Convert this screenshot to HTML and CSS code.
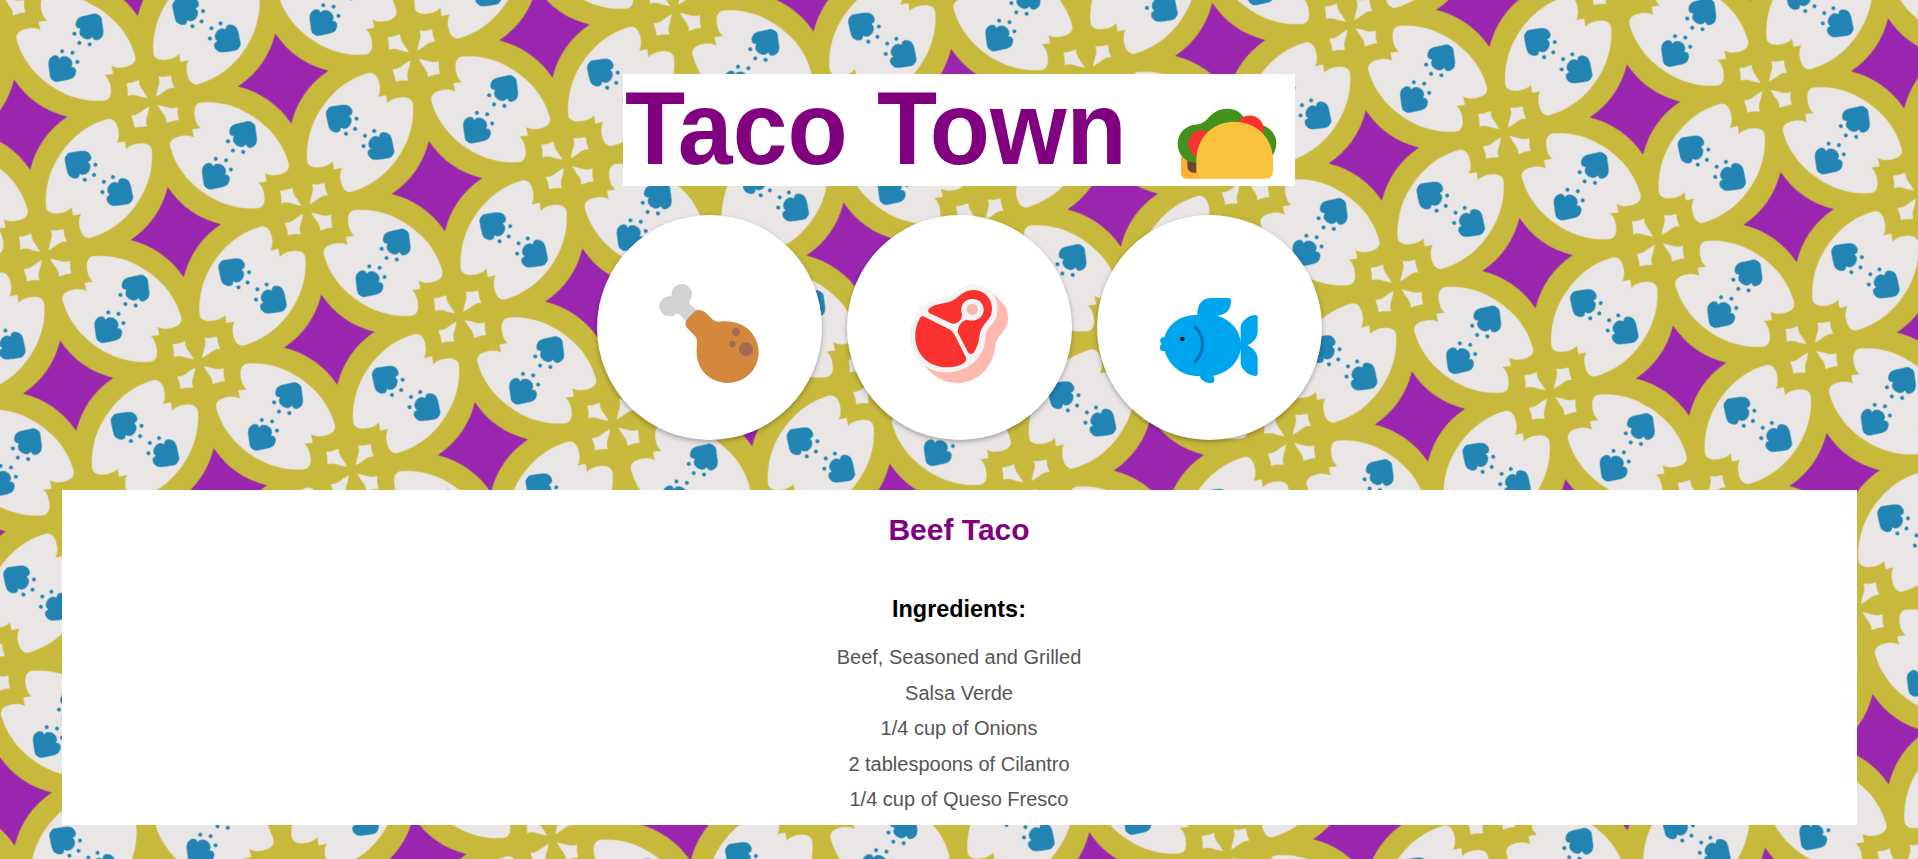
FILE: index.html
```
<!DOCTYPE html>
<html lang="en">
<head>
<meta charset="utf-8">
<title>Taco Town</title>
<link rel="stylesheet" href="styles.css">
</head>
<body>
<svg class="backdrop" aria-hidden="true">
  <defs>
    <g id="petal">
      <path class="cream" d="M45.5 0L39.3 5.7C46 6.4 51 11.500 54 16C57.200 21 56.500 25.500 51.800 28.500C43 35.5 31 41 20 43.4C12 45.2 5 45.5 0 45.5C-5 45.5-12 45.2-20 43.4C-31 41-43 35.5-51.800 28.500C-56.500 25.500-57.200 21-54 16C-51 11.500-46 6.400-39.300 5.700L-45.500 0L-39.300-5.700C-46-6.400-51-11.500-54-16C-57.200-21-56.500-25.500-51.800-28.500C-43-35.500-31-41-20-43.400C-12-45.200-5-45.500 0-45.500C5-45.500 12-45.200 20-43.400C31-41 43-35.500 51.800-28.500C56.500-25.500 57.200-21 54-16C51-11.500 46-6.400 39.300-5.700Z"/>
      <g id="bloom" class="blue">
        <path d="M0-39.800C3-40.300 4.500-38.800 6-37C9.500-33 15-28.500 15.200-24.500C15.200-20.500 13-17.300 10.500-17.300C9-17.300 8-17.800 7-18.500C7.500-14.500 4-12.300 0-12.300C-4-12.300-7.500-14.500-7-18.500C-8-17.800-9-17.300-10.500-17.300C-13-17.300-15.200-20.500-15.200-24.500C-15-28.500-9.500-33-6-37C-4.500-38.800-3-40.300 0-39.800Z"/>
        <circle cx="-9.300" cy="-10.700" r="2"/><circle cx="0" cy="-6" r="2"/><circle cx="9.300" cy="-10.700" r="2"/>
      </g>
      <use href="#bloom" transform="scale(1 -1)"/>
    </g>
    <g id="arm">
      <use href="#petal" x="93.750"/>
      <path class="cream" d="M5.800 0Q12-3 17.500-4.500Q21.500-6.200 23.600-9.700Q27-4 32 0Q27 4 23.600 9.700Q21.500 6.200 17.500 4.500Q12 3 5.800 0Z"/>
      <path class="violet" d="M61.250 61.250Q93.750 73.750 126.250 61.250Q113.750 93.750 126.250 126.250Q93.750 113.750 61.250 126.250Q73.750 93.750 61.250 61.250Z"/>
    </g>
    <pattern id="tiles" x="-93.750" y="-93.750" width="187.500" height="187.500" viewBox="-93.750 -93.750 187.500 187.500" patternUnits="userSpaceOnUse" patternTransform="translate(152.700 101.600) rotate(35)">
      <rect class="gold" x="-94" y="-94" width="188" height="188"/>
      <use href="#arm"/>
      <use href="#arm" transform="rotate(90)"/>
      <use href="#arm" transform="rotate(180)"/>
      <use href="#arm" transform="rotate(270)"/>
    </pattern>
  </defs>
  <rect width="100%" height="100%" fill="url(#tiles)"/>
</svg>

<main class="page">
  <h1 class="title">
    <span class="title-text">Taco Town</span>
    <svg class="taco" viewBox="110 55 300 215" role="img" aria-label="Taco">
      <path fill="#ffb02e" d="M122 200h70v67h-50q-20 0-20-20z"/>
      <path fill="#6d4534" d="M141 205h40v44h-18q-22 0-22-22z"/>
      <path fill="#44911b" d="M168 220C134 218 112 194 112 162C112 130 137 105 168 104C205 104 208 57 260 57C292 57 306 74 316 92L368 107C394 115 408 138 408 160Q407 184 396 196L300 220Z"/>
      <circle cx="185" cy="162" r="41" fill="#fc322f"/>
      <circle cx="328" cy="119" r="42" fill="#fc322f"/>
      <path fill="#f9c23c" d="M168 212C168 142 219 96 282 96C347 96 398 144 398 212V242Q398 267 373 267H193Q168 267 168 242Z"/>
    </svg>
  </h1>

  <nav class="choices">
    <button class="choice" type="button" aria-label="Chicken">
      <svg viewBox="-129 -165 675 675">
        <path fill="#d3d3d3" d="M88 139C72 139 58 125 58 109C58 92 72 79 91 79Q95 80 95 75C93 57 107 42 125 42C143 42 156 57 156 73Q156 84 149 92Q145 97 150 102L172 124L140 156L119 134Q114 129 106 134Q99 139 88 139Z"/>
        <path fill="#d3883e" d="M164 124Q178 115 194 125L219 149Q227 156 240 155C306 145 356 190 356 247C356 299 315 339 263 339C210 339 170 299 170 247Q170 231 171 217Q172 206 165 198L142 175Q131 160 142 146Z"/>
        <g fill="#a56953"><circle cx="288" cy="186" r="12.500"/><circle cx="277" cy="222" r="9.500"/><circle cx="318" cy="238" r="21"/></g>
      </svg>
    </button>
    <button class="choice" type="button" aria-label="Beef">
      <svg viewBox="-129 -165 675 675">
        <path fill="#fdb9ad" d="M302 62L341 103Q355 122 354 148Q353 170 338 187Q319 207 316 226C312 291 263 339 204 339Q160 339 127 311L90 276Z"/>
        <path fill="#f4f4f4" d="M251 43C293 43 323 74 323 116Q323 146 304 164Q287 181 287 201C284 264 234 307 170 307C106 307 60 263 60 197C60 134 99 90 158 84Q181 82 198 66Q221 43 251 43Z"/>
        <path fill="#fa3230" d="M116 117Q125 105 163 99Q188 96 207 78Q228 59 253 60C284 61 307 87 306 118Q305 140 289 156Q271 174 268 201Q266 225 251 248Q242 257 234 247L204 189C202 169 213 154 230 149C258 158 281 142 281 119C281 100 267 87 247 87C222 87 208 109 216 133C217 150 202 165 183 160L119 130Q112 126 116 117Z"/>
        <circle cx="247" cy="118" r="17" fill="#fdb9ad"/>
        <path fill="#fa3230" d="M91 142Q97 136 105 141L169 173Q186 180 194 195L227 260Q232 271 222 279Q202 292 172 292C117 292 77 255 76 201Q75 169 91 142Z"/>
      </svg>
    </button>
    <button class="choice" type="button" aria-label="Fish">
      <svg viewBox="-129 -195 675 675">
        <path fill="#00a6ed" d="M172 105C172 72 186 54 214 54H266Q273 54 273 62C273 88 261 103 232 107C271 118 299 149 302 186V140C305 122 325 106 347 105Q353 105 353 111V158Q350 182 323 196Q350 211 353 233V282Q353 288 346 288C325 286 308 272 302 252V208C296 250 260 281 217 288Q223 289 223 296V303Q223 309 216 309C195 309 181 301 180 288C127 290 88 259 74 213H66Q60 211 60 205V200Q60 196 66 192Q60 188 60 182Q61 171 74 171C85 130 125 103 172 105Z"/>
        <path fill="none" stroke="#0074ba" stroke-width="10" stroke-linecap="round" d="M166 142C195 170 195 214 166 244"/>
        <circle cx="127" cy="177" r="7" fill="#212121"/>
      </svg>
    </button>
  </nav>

  <section class="recipe">
    <h2 class="recipe-name">Beef Taco</h2>
    <h3 class="recipe-heading">Ingredients:</h3>
    <ul class="ingredients">
      <li>Beef, Seasoned and Grilled</li>
      <li>Salsa Verde</li>
      <li>1/4 cup of Onions</li>
      <li>2 tablespoons of Cilantro</li>
      <li>1/4 cup of Queso Fresco</li>
    </ul>
  </section>
</main>
</body>
</html>
```
FILE: styles.css
```
* { box-sizing: border-box; }

body {
  margin: 0;
  height: 100vh;
  overflow: hidden;
  font-family: "Liberation Sans", Arial, sans-serif;
  font-size: 20px;
}

.backdrop {
  position: fixed;
  inset: 0;
  z-index: -1;
  width: 100%;
  height: 100%;
}

.gold { fill: #c7b93c; }
.cream { fill: #eae6e5; }
.blue { fill: #2184b3; }
.violet { fill: #9a26b0; }

.page {
  display: flex;
  flex-direction: column;
  align-items: center;
  padding-top: 74px;
}

.title {
  display: flex;
  justify-content: space-between;
  width: 672px;
  height: 112px;
  margin: 0;
  padding: 0 18px 0 2px;
  background: #fff;
  color: purple;
  font-size: 98.5px;
  line-height: 112px;
  white-space: nowrap;
}

.title-text {
  word-spacing: 2px;
  transform: scaleY(1.045);
  transform-origin: 0 91px;
}

.taco {
  width: 100px;
  height: 72px;
  margin-top: 34px;
}

.choices {
  display: flex;
  gap: 25px;
  margin-top: 29px;
}

.choice {
  width: 225px;
  height: 225px;
  padding: 0;
  border: 0;
  border-radius: 50%;
  background: #fff;
  box-shadow: 0 2px 5px rgba(0, 0, 0, 0.3);
}

.choice svg {
  display: block;
  width: 100%;
  height: 100%;
}

.recipe {
  width: 1795px;
  height: 335px;
  margin-top: 50px;
  padding-top: 23px;
  background: #fff;
  text-align: center;
}

.recipe-name {
  margin: 0 0 49px;
  color: purple;
  font-size: 30px;
  line-height: 34px;
}

.recipe-heading {
  margin: 0 0 17px;
  color: #000;
  font-size: 23.4px;
  line-height: 27px;
}

.ingredients {
  margin: 0;
  padding: 0;
  list-style: none;
  color: #555;
  line-height: 35.5px;
}
```
